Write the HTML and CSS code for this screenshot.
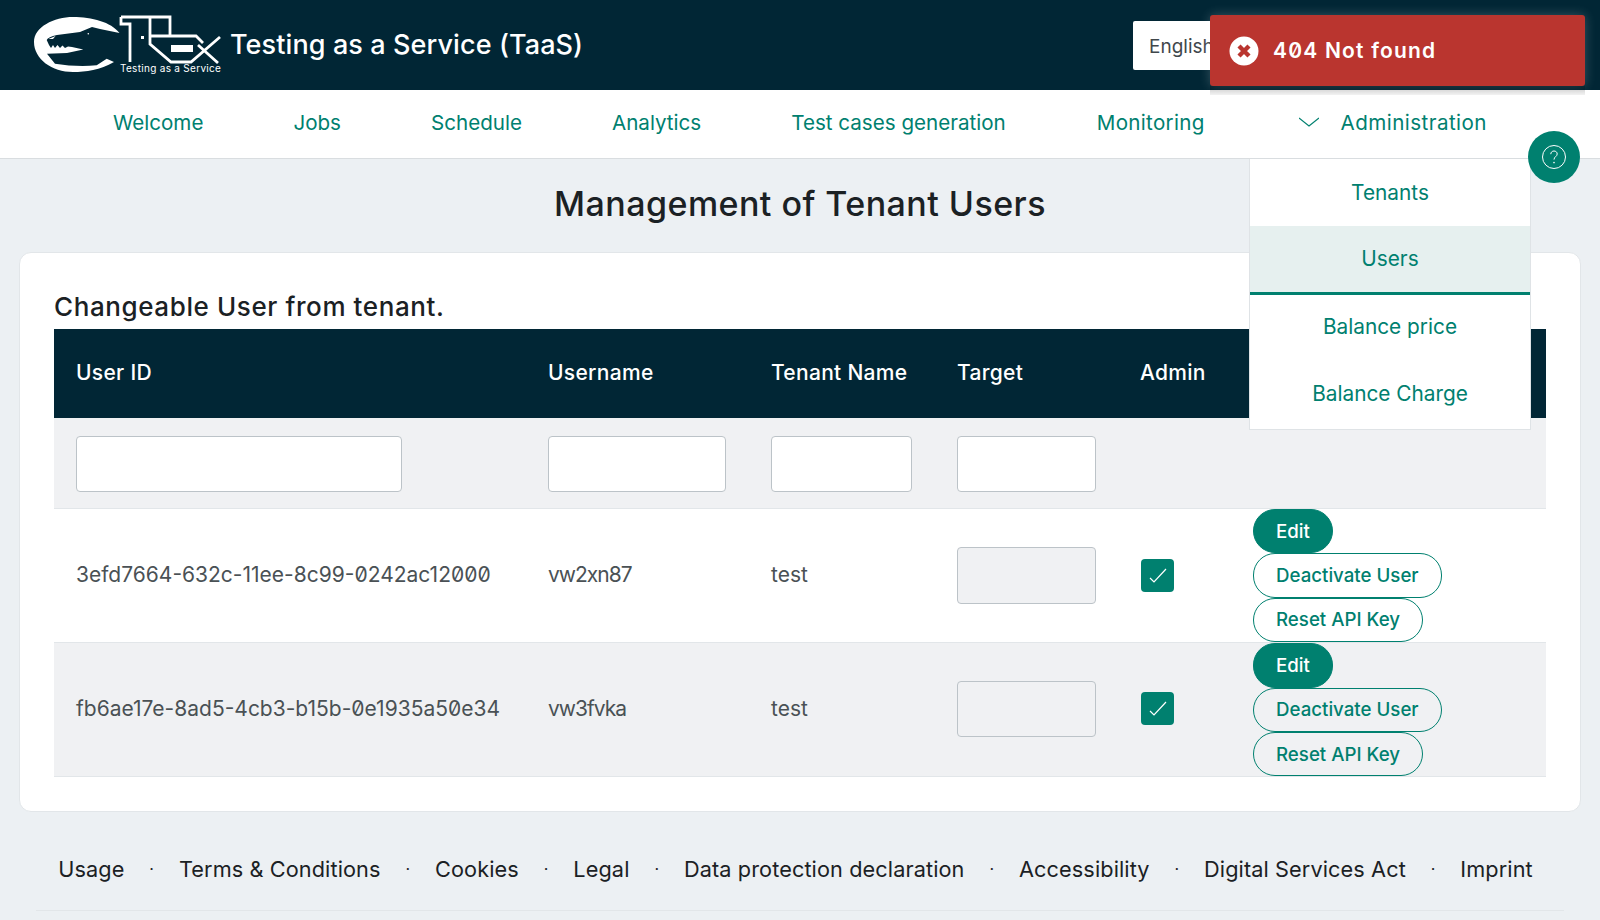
FILE: index.html
```html
<!DOCTYPE html>
<html lang="en">
<head>
    <meta charset="UTF-8">
    <meta name="viewport" content="width=device-width, initial-scale=1.0">
    <title>Management of Tenant Users</title>
    <link rel="stylesheet" href="styles.css">
</head>
<body>
    <header class="topbar">
        <div class="brand">
            <div class="logo">
                <svg width="190" height="60" viewBox="0 0 190 60">
                    <path class="logo-fill" d="M0 27C0 12 20 2 39 2C58 2 77 7 85.5 18L66 14L58 12L46 17L23 20Q14 22 12.7 25L15 30L17 33L19 30L21 33L23.5 30L26 33L28.5 30.5L31 33L34 31.5L38 32L49.3 34.5L33 38L13 38.7L21 48.7Q42 52 62.7 50.3L72.7 43.7L80 47C66 55 52 57 39 57C18 57 0 44 0 27Z"/>
                    <path class="logo-fill" d="M14.5 24l7-3-2.5 3z"/>
                    <circle class="logo-fill" cx="54.3" cy="18.7" r=".8"/>
                    <path fill="none" stroke="#fff" stroke-width="2.8" d="M87 2H136V21H117M136 21H162L169 28M87 2V9H96V47M116 2V29L137 47H157L186 22M164 30L184 48"/>
                    <rect class="logo-fill" x="137" y="30" width="22" height="7"/>
                    <rect class="logo-fill" x="107" y="21" width="3" height="3"/>
                </svg>
                <span class="logo-text">Testing as a Service</span>
            </div>
            <span class="brand-title">Testing as a Service (TaaS)</span>
        </div>
        <div class="lang">English</div>
    </header>

    <nav class="mainnav">
        <a>Welcome</a>
        <a>Jobs</a>
        <a>Schedule</a>
        <a>Analytics</a>
        <a>Test cases generation</a>
        <a class="nav-monitoring">Monitoring</a>
        <a class="nav-admin">
            <svg width="20" height="10" viewBox="0 0 20 10"><path fill="none" stroke="#00806f" stroke-width="1.2" d="M0 1l10 8 10-8"/></svg>
            <span>Administration</span>
        </a>
    </nav>

    <main class="content">
        <h1>Management of Tenant Users</h1>
        <section class="card">
            <h2>Changeable User from tenant.</h2>
            <table class="users">
                <colgroup>
                    <col class="c-id"><col class="c-name"><col class="c-tenant"><col class="c-target"><col class="c-admin"><col>
                </colgroup>
                <thead>
                    <tr>
                        <th>User ID</th>
                        <th>Username</th>
                        <th>Tenant Name</th>
                        <th>Target</th>
                        <th>Admin</th>
                        <th></th>
                    </tr>
                </thead>
                <tbody>
                    <tr class="filters">
                        <td><input class="w-id"></td>
                        <td><input class="w-name"></td>
                        <td><input class="w-tenant"></td>
                        <td><input class="w-target"></td>
                        <td></td>
                        <td></td>
                    </tr>
                    <tr>
                        <td class="txt">3efd7664-632c-11ee-8c99-0242ac12000</td>
                        <td class="txt uname">vw2xn87</td>
                        <td class="txt">test</td>
                        <td><input class="w-target tall" disabled></td>
                        <td><span class="check"><svg width="24" height="24" viewBox="0 0 24 24"><path fill="none" stroke="#fff" stroke-width="1.2" d="M4 14l4 4 12-13"/></svg></span></td>
                        <td>
                            <div class="actions">
                                <button class="btn primary">Edit</button>
                                <button class="btn">Deactivate User</button>
                                <button class="btn">Reset API Key</button>
                            </div>
                        </td>
                    </tr>
                    <tr class="alt">
                        <td class="txt">fb6ae17e-8ad5-4cb3-b15b-0e1935a50e34</td>
                        <td class="txt uname">vw3fvka</td>
                        <td class="txt">test</td>
                        <td><input class="w-target" disabled></td>
                        <td><span class="check"><svg width="24" height="24" viewBox="0 0 24 24"><path fill="none" stroke="#fff" stroke-width="1.2" d="M4 14l4 4 12-13"/></svg></span></td>
                        <td>
                            <div class="actions">
                                <button class="btn primary">Edit</button>
                                <button class="btn">Deactivate User</button>
                                <button class="btn">Reset API Key</button>
                            </div>
                        </td>
                    </tr>
                </tbody>
            </table>
        </section>
    </main>

    <footer class="footer">
        <a>Usage</a><i>·</i>
        <a>Terms &amp; Conditions</a><i>·</i>
        <a>Cookies</a><i>·</i>
        <a>Legal</a><i>·</i>
        <a>Data protection declaration</a><i>·</i>
        <a>Accessibility</a><i>·</i>
        <a>Digital Services Act</a><i>·</i>
        <a>Imprint</a>
    </footer>

    <ul class="dropdown">
        <li>Tenants</li>
        <li class="active">Users</li>
        <li>Balance price</li>
        <li>Balance Charge</li>
    </ul>

    <div class="help">
        <svg width="28" height="28" viewBox="0 0 28 28">
            <circle cx="14" cy="14" r="11.5" fill="none" stroke="#fff" stroke-width="1"/>
            <path fill="none" stroke="#fff" stroke-width="1" d="M10.8 11.2c0-2 1.4-3.2 3.2-3.2s3.2 1.2 3.2 3c0 2.6-3.2 2.6-3.2 5.6"/>
            <circle cx="14" cy="19.6" r=".8" fill="#fff"/>
        </svg>
    </div>

    <div class="toast">
        <svg width="30" height="30" viewBox="0 0 30 30">
            <circle cx="15" cy="15" r="14.5" fill="#fff"/>
            <path stroke="#ba352f" stroke-width="4.4" d="M10 10l10 10M20 10L10 20"/>
        </svg>
        <span>404 Not found</span>
    </div>
</body>
</html>
```
FILE: styles.css
```css
html, body {
    margin: 0;
    height: 100%;
    overflow: hidden;
}
body {
    font-family: Inter, "Noto Sans", sans-serif;
    font-feature-settings: "zero" 1;
    background-color: #ecf0f3;
    color: #1b2124;
    font-size: 21px;
}
a {
    text-decoration: none;
}

.topbar {
    height: 90px;
    background-color: #012635;
    display: flex;
    align-items: center;
    justify-content: space-between;
    padding: 0 0 0 34px;
    box-sizing: border-box;
}
.brand {
    display: flex;
    align-items: center;
    gap: 8px;
}
.logo {
    position: relative;
    width: 188px;
    height: 60px;
}
.logo svg {
    display: block;
}
.logo-fill {
    fill: #fff;
}
.logo-text {
    position: absolute;
    left: 86px;
    top: 47px;
    color: #fff;
    font-size: 10px;
    line-height: 12px;
    letter-spacing: 0.3px;
    white-space: nowrap;
}
.brand-title {
    color: #fff;
    font-size: 27px;
    font-weight: 500;
    letter-spacing: 0.1px;
    margin-top: -2px;
}
.lang {
    width: 185px;
    height: 49px;
    margin-right: 282px;
    background: #fff;
    border-radius: 2px;
    box-sizing: border-box;
    padding: 14px 16px;
    color: #3f474b;
    font-size: 19px;
}

.mainnav {
    height: 69px;
    background: #fff;
    border-bottom: 1px solid #d9dde0;
    box-sizing: border-box;
    display: flex;
    align-items: center;
    gap: 90px;
    padding: 0 0 4px 113px;
}
.mainnav a {
    color: #00806f;
    font-size: 20.6px;
}
.mainnav .nav-monitoring {
    margin-left: 1px;
    letter-spacing: 0.3px;
}
.nav-admin {
    display: flex;
    align-items: center;
    gap: 22px;
    margin-left: 4px;
    letter-spacing: 0.44px;
}

.content h1 {
    margin: 0;
    text-align: center;
    font-size: 34px;
    font-weight: 500;
    letter-spacing: 0.45px;
    line-height: 42px;
    padding: 24px 0 27px;
}
.card {
    margin: 0 19px;
    height: 560px;
    box-sizing: border-box;
    padding: 38px 34px 0;
    background: #fff;
    border: 1px solid #e2e6e9;
    border-radius: 12px;
}
.card h2 {
    margin: 0;
    font-size: 26px;
    font-weight: 500;
    letter-spacing: 0.6px;
    line-height: 31px;
    height: 38px;
}

.users {
    width: 100%;
    table-layout: fixed;
    border-collapse: collapse;
}
.c-id { width: 472px; }
.c-name { width: 223px; }
.c-tenant { width: 186px; }
.c-target { width: 183px; }
.c-admin { width: 113px; }
.users th {
    height: 89px;
    background-color: #012635;
    color: #fff;
    font-size: 21px;
    font-weight: 500;
    letter-spacing: 0.3px;
    text-align: left;
    padding: 0 0 2px 22px;
    box-sizing: border-box;
}
.users td {
    padding: 0 0 0 22px;
    border-bottom: 1px solid #e2e6e9;
    color: #4a5155;
    font-size: 21px;
}
.users td.txt {
    padding-bottom: 2px;
}
.users td.uname {
    letter-spacing: -1px;
}
.filters td {
    height: 90px;
    background-color: #f0f1f3;
}
.users input {
    display: block;
    height: 56px;
    box-sizing: border-box;
    background: #fff;
    border: 1px solid #bcc3c8;
    border-radius: 4px;
}
.users .filters input {
    margin-top: 2px;
}
.users input:disabled {
    background: #f0f1f3;
}
.users input.tall {
    height: 57px;
}
.users .alt input,
.users .alt .check {
    margin-top: -2px;
}
.w-id { width: 326px; }
.w-name { width: 178px; }
.w-tenant { width: 141px; }
.w-target { width: 139px; }

.users tr.alt td {
    background-color: #f0f1f3;
}
.check {
    display: flex;
    align-items: center;
    justify-content: center;
    width: 33px;
    height: 33px;
    margin-left: 1px;
    background: #00806f;
    border-radius: 4px;
}
.actions {
    display: flex;
    flex-direction: column;
    align-items: flex-start;
}
.btn {
    height: 44.4px;
    padding: 0 22px;
    font-family: inherit;
    font-feature-settings: inherit;
    font-size: 18.7px;
    font-weight: 500;
    color: #00806f;
    background: transparent;
    border: 1px solid #00806f;
    border-radius: 22px;
}
.btn.primary {
    background: #00806f;
    color: #fff;
}

.footer {
    height: 99px;
    margin: 0 36px;
    padding: 15px 9px 0 0;
    box-sizing: border-box;
    display: flex;
    justify-content: center;
    align-items: center;
    gap: 24.9px;
    border-bottom: 1px solid #e2e6e9;
    font-size: 21.7px;
    letter-spacing: 0.1px;
}
.footer a {
    color: #1b2124;
    white-space: nowrap;
}
.footer i {
    font-style: normal;
    font-size: 16px;
}

.dropdown {
    position: absolute;
    left: 1249px;
    top: 159px;
    width: 282px;
    margin: 0;
    padding: 0;
    list-style: none;
    background: #fff;
    border: 1px solid #dfe3e6;
    border-top: none;
    box-sizing: border-box;
}
.dropdown li {
    height: 67px;
    display: flex;
    align-items: center;
    justify-content: center;
    color: #00806f;
    font-size: 20.8px;
    box-sizing: border-box;
}
.dropdown li.active {
    height: 69px;
    padding-bottom: 2px;
    background: #e6f0ef;
    border-bottom: 3px solid #00806f;
}
.dropdown li.active ~ li {
    padding-bottom: 5px;
}
.help {
    position: absolute;
    left: 1528px;
    top: 131px;
    width: 52px;
    height: 52px;
    border-radius: 50%;
    background: #00806f;
    display: flex;
    align-items: center;
    justify-content: center;
}
.toast {
    position: absolute;
    left: 1210px;
    top: 15px;
    width: 375px;
    height: 71px;
    box-sizing: border-box;
    padding-left: 19px;
    display: flex;
    align-items: center;
    gap: 14px;
    background: #ba352f;
    border-radius: 3px;
    box-shadow: 0 0 12px rgba(255, 255, 255, 0.22);
    color: #fff;
    font-size: 21px;
    font-weight: 600;
    letter-spacing: 1.2px;
}
.toast::after {
    content: "";
    position: absolute;
    left: 0;
    right: 0;
    top: 100%;
    height: 9px;
    background: linear-gradient(rgba(0, 0, 0, 0.22), rgba(0, 0, 0, 0.05));
}
```
